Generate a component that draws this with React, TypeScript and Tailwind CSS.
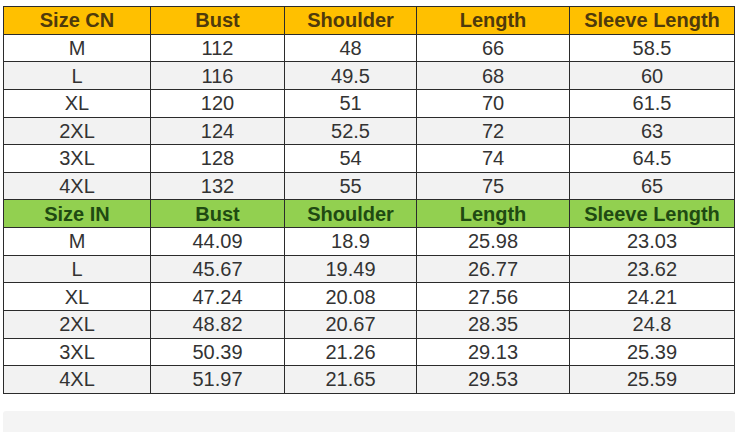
const headers = ["Bust", "Shoulder", "Length", "Sleeve Length"];

const cnRows = [
  ["M", "112", "48", "66", "58.5"],
  ["L", "116", "49.5", "68", "60"],
  ["XL", "120", "51", "70", "61.5"],
  ["2XL", "124", "52.5", "72", "63"],
  ["3XL", "128", "54", "74", "64.5"],
  ["4XL", "132", "55", "75", "65"],
];

const inRows = [
  ["M", "44.09", "18.9", "25.98", "23.03"],
  ["L", "45.67", "19.49", "26.77", "23.62"],
  ["XL", "47.24", "20.08", "27.56", "24.21"],
  ["2XL", "48.82", "20.67", "28.35", "24.8"],
  ["3XL", "50.39", "21.26", "29.13", "25.39"],
  ["4XL", "51.97", "21.65", "29.53", "25.59"],
];

function HeaderRow({ first, bg, color }: { first: string; bg: string; color: string }) {
  return (
    <tr className={`h-[27.64px] ${bg}`}>
      {[first, ...headers].map((h) => (
        <th key={h} className={`border border-[#2b2b2b] p-0 text-center text-[20px] font-bold leading-none ${color}`}>
          {h}
        </th>
      ))}
    </tr>
  );
}

function BodyRows({ rows }: { rows: string[][] }) {
  return (
    <>
      {rows.map((r, i) => (
        <tr key={r[0]} className={`h-[27.64px] ${i % 2 === 1 ? "bg-[#f2f2f2]" : "bg-white"}`}>
          {r.map((v, j) => (
            <td key={j} className="border border-[#2b2b2b] p-0 text-center text-[20px] leading-none text-[#333333]">
              {v}
            </td>
          ))}
        </tr>
      ))}
    </>
  );
}

export default function App() {
  return (
    <div className="h-[432px] w-[738px] overflow-hidden bg-white px-[3px] pt-[6px]" style={{ fontFamily: '"Liberation Sans", Arial, sans-serif' }}>
      <table className="w-[731px] table-fixed border-collapse">
        <colgroup>
          <col className="w-[147px]" />
          <col className="w-[134px]" />
          <col className="w-[132px]" />
          <col className="w-[153px]" />
          <col className="w-[165px]" />
        </colgroup>
        <tbody>
          <HeaderRow first="Size CN" bg="bg-[#ffc000]" color="text-[#4f3a0c]" />
          <BodyRows rows={cnRows} />
          <HeaderRow first="Size IN" bg="bg-[#92d050]" color="text-[#1f4a12]" />
          <BodyRows rows={inRows} />
        </tbody>
      </table>
      <div className="mt-[17px] h-[24px] w-[732px] rounded-[3px] bg-[#f4f4f4]" />
    </div>
  );
}
